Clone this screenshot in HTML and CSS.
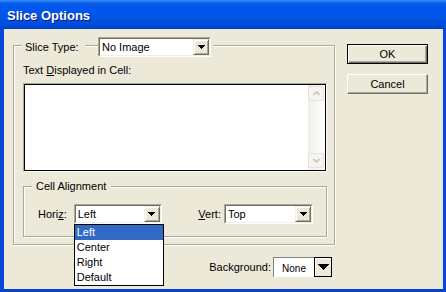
FILE: index.html
```html
<!DOCTYPE html>
<html lang="en">
<head>
    <meta charset="UTF-8">
    <title>Slice Options</title>
    <link rel="stylesheet" href="styles.css">
</head>
<body>
    <div class="dialog">
        <div class="titlebar">
            <span class="title">Slice Options</span>
        </div>

        <div class="frame">
            <div class="main">
                <div class="group slice-group">
                    <div class="group-head">
                        <span class="group-label slice-label">Slice Type:</span>
                        <div class="head-combo">
                            <div class="combo combo-slice">
                                <div class="combo-field">
                                    <span class="combo-text">No Image</span>
                                    <span class="combo-btn"><svg width="7" height="4" viewBox="0 0 7 4"><path d="M0 0h7v1h-1v1h-1v1h-1v1h-1v-1h-1v-1h-1v-1h-1z"/></svg></span>
                                </div>
                            </div>
                        </div>
                    </div>

                    <div class="field-label">Text <u>D</u>isplayed in Cell:</div>
                    <div class="textbox">
                        <div class="textbox-inner">
                            <div class="scrollbar">
                                <span class="scroll-btn"><svg width="7" height="5" viewBox="0 0 7 5"><path d="M0.5 4L3.5 1L6.5 4" fill="none" stroke="#c4c3b8" stroke-width="1.6"/></svg></span>
                                <span class="scroll-btn"><svg width="7" height="5" viewBox="0 0 7 5"><path d="M0.5 1L3.5 4L6.5 1" fill="none" stroke="#c4c3b8" stroke-width="1.6"/></svg></span>
                            </div>
                        </div>
                    </div>

                    <div class="group align-group">
                        <div class="group-head">
                            <span class="group-label">Cell Alignment</span>
                        </div>
                        <div class="align-row">
                            <span class="row-label horiz-label">Hori<u>z</u>:</span>
                            <div class="combo combo-horiz">
                                <div class="combo-field">
                                    <span class="combo-text">Left</span>
                                    <span class="combo-btn"><svg width="7" height="4" viewBox="0 0 7 4"><path d="M0 0h7v1h-1v1h-1v1h-1v1h-1v-1h-1v-1h-1v-1h-1z"/></svg></span>
                                </div>
                                <ul class="dropdown">
                                    <li class="selected">Left</li>
                                    <li>Center</li>
                                    <li>Right</li>
                                    <li>Default</li>
                                </ul>
                            </div>
                            <span class="row-label vert-label"><u>V</u>ert:</span>
                            <div class="combo combo-vert">
                                <div class="combo-field">
                                    <span class="combo-text">Top</span>
                                    <span class="combo-btn"><svg width="7" height="4" viewBox="0 0 7 4"><path d="M0 0h7v1h-1v1h-1v1h-1v1h-1v-1h-1v-1h-1v-1h-1z"/></svg></span>
                                </div>
                            </div>
                        </div>
                    </div>
                </div>

                <div class="bg-row">
                    <span>Background:</span>
                    <div class="swatch">
                        <span class="swatch-text">None</span>
                        <span class="swatch-btn"><svg width="11" height="6" viewBox="0 0 11 6"><path d="M0 0h11v1h-1v1h-1v1h-1v1h-1v1h-1v1h-1v-1h-1v-1h-1v-1h-1v-1h-1v-1h-1z"/></svg></span>
                    </div>
                </div>
            </div>

            <div class="buttons">
                <button class="btn btn-default">OK</button>
                <button class="btn">Cancel</button>
            </div>
        </div>
    </div>
</body>
</html>
```

FILE: styles.css
```css
body {
    margin: 0;
    font-family: "Liberation Sans", Arial, sans-serif;
    font-size: 11px;
    color: #000;
    background: #ece9d8;
}
.dialog {
    width: 446px;
    height: 292px;
    display: flex;
    flex-direction: column;
}
.titlebar {
    height: 29px;
    box-sizing: border-box;
    padding: 2px 0 0 7px;
    display: flex;
    align-items: center;
    background: linear-gradient(#3d8ff7 0, #0a5fe9 3px, #0058ee 6px, #0055e5 60%, #004ad8 90%, #0040c8 100%);
}
.title {
    font-size: 13px;
    font-weight: bold;
    color: #fff;
    text-shadow: 1px 1px 0 #0a1883;
}
.frame {
    flex: 1;
    display: flex;
    align-items: flex-start;
    background: #ece9d8;
    border-left: 4px solid #0847d8;
    border-right: 3px solid #0847d8;
    border-bottom: 3px solid #0841cf;
    padding: 8px 0 0 9px;
}
.main {
    width: 322px;
}
.group {
    border: 1px solid #aca899;
    box-shadow: inset 1px 1px 0 #fff, 1px 1px 0 #fff;
}
.group-head {
    display: flex;
    align-items: center;
}
.group-label {
    background: #ece9d8;
    line-height: 13px;
}
.slice-group {
    margin-top: 8px;
    padding: 0 7px 7px 9px;
}
.slice-group > .group-head {
    height: 20px;
    margin: -9px 0 0 -1px;
}
.slice-label {
    width: 63px;
    box-sizing: border-box;
    padding-left: 3px;
}
.head-combo {
    margin-left: 13px;
    padding-right: 2px;
    background: #ece9d8;
}
.combo-slice {
    width: 113px;
}
.field-label {
    margin-top: 7px;
    line-height: 13px;
}
.textbox {
    margin-top: 6px;
    height: 89px;
    box-sizing: border-box;
    border: 1px solid;
    border-color: #aca899 #fff #fff #aca899;
    display: flex;
}
.textbox-inner {
    flex: 1;
    display: flex;
    justify-content: flex-end;
    border: 1px solid #000;
    background: #fff;
    padding-right: 1px;
}
.scrollbar {
    width: 16px;
    box-sizing: border-box;
    padding: 1px 0 2px;
    display: flex;
    flex-direction: column;
    justify-content: space-between;
    background: linear-gradient(to right, #efeee7, #f7f7f2 45%, #fcfcfa);
}
.scroll-btn {
    height: 15px;
    box-sizing: border-box;
    border: 1px solid #e4e3da;
    border-radius: 2px;
    background: #f5f4ef;
    display: flex;
    align-items: center;
    justify-content: center;
}
.align-group {
    margin-top: 14px;
    padding-bottom: 12px;
}
.align-group > .group-head {
    margin: -7px 0 0 8px;
}
.align-group .group-label {
    padding: 0 5px 0 4px;
}
.align-row {
    display: flex;
    align-items: center;
    margin-top: 11px;
    padding: 0 13px 0 14px;
}
.horiz-label {
    margin-right: 7px;
}
.vert-label {
    margin-left: auto;
    margin-right: 3px;
}
.combo {
    position: relative;
    height: 20px;
    box-sizing: border-box;
    border: 1px solid;
    border-color: #aca899 #fff #fff #aca899;
}
.combo-horiz {
    width: 88px;
}
.combo-vert {
    width: 89px;
}
.combo-field {
    height: 100%;
    box-sizing: border-box;
    display: flex;
    border: 1px solid;
    border-color: #716f64 #f1efe2 #f1efe2 #716f64;
    background: #fff;
}
.combo-text {
    flex: 1;
    padding-left: 2px;
    line-height: 16px;
}
.combo-btn {
    width: 16px;
    box-sizing: border-box;
    display: flex;
    align-items: center;
    justify-content: center;
    background: #ece9d8;
    border: 1px solid;
    border-color: #f1efe2 #716f64 #716f64 #f1efe2;
    box-shadow: inset 1px 1px 0 #fff, inset -1px -1px 0 #aca899;
}
.dropdown {
    position: absolute;
    top: 19px;
    left: -1px;
    z-index: 2;
    width: 90px;
    box-sizing: border-box;
    margin: 0;
    padding: 0;
    list-style: none;
    border: 1px solid #000;
    background: #fff;
}
.dropdown li {
    height: 15px;
    line-height: 15px;
    padding-left: 2px;
}
.dropdown .selected {
    background: #316ac5;
    color: #fff;
}
.bg-row {
    display: flex;
    justify-content: flex-end;
    align-items: center;
    gap: 2px;
    margin-top: 12px;
    padding-right: 3px;
}
.swatch {
    display: flex;
    height: 20px;
}
.swatch-text {
    width: 41px;
    box-sizing: border-box;
    border-top: 1px solid #808080;
    border-left: 1px solid #808080;
    background: #fff;
    font-size: 10px;
    line-height: 19px;
    padding-top: 1px;
    text-align: center;
}
.swatch-btn {
    width: 18px;
    box-sizing: border-box;
    display: flex;
    align-items: center;
    justify-content: center;
    border: 1px solid #000;
    background: #ece9d8;
    box-shadow: inset 1px 1px 0 #fff;
}
.buttons {
    margin: 7px 0 0 12px;
    display: flex;
    flex-direction: column;
    gap: 10px;
}
.btn {
    width: 81px;
    height: 20px;
    padding: 0;
    font-family: "Liberation Sans", Arial, sans-serif;
    font-size: 11px;
    color: #000;
    background: #ece9d8;
    border: 1px solid;
    border-color: #fff #716f64 #716f64 #fff;
    box-shadow: inset -1px -1px 0 #aca899;
}
.btn-default {
    border-color: #000;
    box-shadow: inset 1px 1px 0 #fff, inset -1px -1px 0 #716f64, inset -2px -2px 0 #aca899;
}
```
